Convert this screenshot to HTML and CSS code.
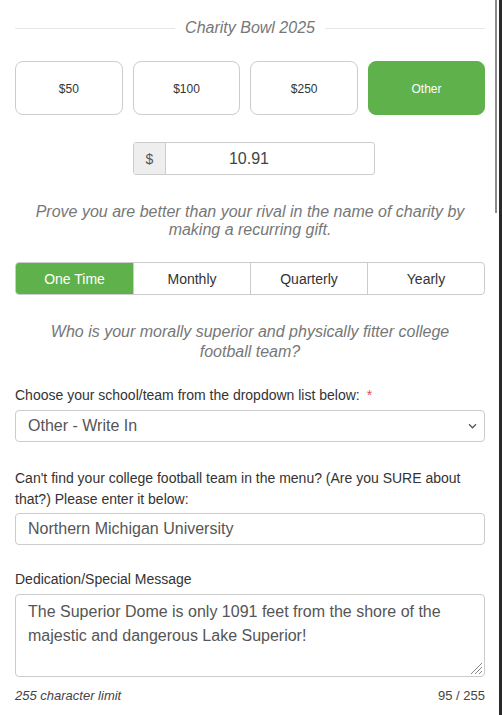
FILE: index.html
```html
<!DOCTYPE html>
<html lang="en">
<head>
<meta charset="utf-8">
<title>Charity Bowl 2025</title>
<link rel="stylesheet" href="styles.css">
</head>
<body>
<div class="page">
  <div class="title-row">
    <span class="rule"></span>
    <h1 class="title">Charity Bowl 2025</h1>
    <span class="rule"></span>
  </div>

  <div class="amounts">
    <button class="amount">$50</button>
    <button class="amount">$100</button>
    <button class="amount">$250</button>
    <button class="amount active">Other</button>
  </div>

  <div class="input-group">
    <span class="addon">$</span>
    <span class="amount-input">10.91</span>
  </div>

  <p class="lead">Prove you are better than your rival in the name of charity by making a recurring gift.</p>

  <div class="freq">
    <span class="seg active">One Time</span>
    <span class="seg">Monthly</span>
    <span class="seg">Quarterly</span>
    <span class="seg">Yearly</span>
  </div>

  <p class="question">Who is your morally superior and physically fitter college football team?</p>

  <label class="label">Choose your school/team from the dropdown list below: <span class="req">*</span></label>
  <div class="field select">
    <span>Other - Write In</span>
    <svg class="chev" width="9" height="6" viewBox="0 0 9 6"><path d="M1 1.3 L4.5 4.8 L8 1.3" fill="none" stroke="#555" stroke-width="1.3"/></svg>
  </div>

  <label class="label two">Can't find your college football team in the menu? (Are you SURE about that?) Please enter it below:</label>
  <div class="field">Northern Michigan University</div>

  <label class="label three">Dedication/Special Message</label>
  <div class="field textarea">
    The Superior Dome is only 1091 feet from the shore of the majestic and dangerous Lake Superior!
    <svg class="grip" width="14" height="14" viewBox="0 0 14 14"><path d="M13 2 L2 13 M13 6 L6 13 M13 10 L10 13" stroke="#888" stroke-width="1"/></svg>
  </div>
  <div class="counter">
    <span class="limit">255 character limit</span>
    <span class="count">95 / 255</span>
  </div>
</div>
<div class="scrollbar"><div class="track"><div class="thumb"></div></div><div class="edge"></div></div>
</body>
</html>
```

FILE: styles.css
```css
html, body {
  margin: 0;
  padding: 0;
  height: 100%;
  overflow: hidden;
}
body {
  display: flex;
  background: #fff;
  font-family: "Liberation Sans", Arial, sans-serif;
  color: #333;
}
.page {
  flex: 1;
  padding: 18px 9px 0 15px;
  min-width: 0;
}
.title-row {
  display: flex;
  align-items: center;
  gap: 10px;
}
.rule {
  flex: 1;
  height: 1px;
  background: #e6e6e6;
}
.title {
  margin: 0;
  font-size: 16px;
  line-height: 20px;
  font-weight: normal;
  font-style: italic;
  color: #777;
}
.amounts {
  margin-top: 23px;
  display: grid;
  grid-template-columns: 1fr 1fr 1fr 117px;
  gap: 10px;
}
.amount {
  height: 54px;
  border: 1px solid #ccc;
  border-radius: 8px;
  background: #fff;
  font-family: "Liberation Sans", Arial, sans-serif;
  font-size: 12px;
  color: #333;
  padding: 2px 0 0;
}
.amount.active {
  background: #5fb14b;
  border-color: #5fb14b;
  color: #fff;
}
.input-group {
  margin: 27px 0 0 118px;
  width: 242px;
  height: 33px;
  display: flex;
  box-sizing: border-box;
  border: 1px solid #ccc;
  border-radius: 3px;
}
.addon {
  width: 31px;
  background: #eee;
  border-right: 1px solid #ccc;
  display: flex;
  align-items: center;
  justify-content: center;
  font-size: 14px;
  color: #555;
}
.amount-input {
  flex: 1;
  display: flex;
  align-items: center;
  justify-content: center;
  padding-right: 42px;
  font-size: 16px;
  color: #444;
}
.lead, .question {
  margin: 0;
  text-align: center;
  font-style: italic;
  font-size: 16px;
  color: #777;
}
.lead {
  margin-top: 28px;
  line-height: 18px;
  padding: 0 12px;
}
.freq {
  margin-top: 23px;
  height: 33px;
  display: grid;
  grid-template-columns: repeat(4, 1fr);
  box-sizing: border-box;
  border: 1px solid #ccc;
  border-radius: 4px;
  overflow: hidden;
}
.seg {
  display: flex;
  align-items: center;
  justify-content: center;
  font-size: 14px;
  color: #333;
  border-left: 1px solid #ccc;
}
.seg:first-child { border-left: none; }
.seg.active {
  background: #5fb14b;
  color: #fff;
}
.question {
  margin-top: 27px;
  line-height: 20px;
  padding: 0 30px;
}
.label {
  display: block;
  margin-top: 23px;
  font-size: 14px;
  line-height: 20px;
  color: #333;
}
.label.two { margin-top: 26px; line-height: 21px; }
.label.three { margin-top: 24px; }
.req { color: #d9534f; margin-left: 3px; }
.field {
  margin-top: 5px;
  height: 32px;
  box-sizing: border-box;
  border: 1px solid #ccc;
  border-radius: 4px;
  padding: 0 12px;
  display: flex;
  align-items: center;
  font-size: 16px;
  color: #555;
}
.label.two + .field { margin-top: 3px; }
.select {
  justify-content: space-between;
  padding-right: 7px;
}
.textarea {
  position: relative;
  display: block;
  height: 83px;
  padding: 5px 12px;
  line-height: 24px;
  margin-top: 5px;
}
.grip {
  position: absolute;
  right: 1px;
  bottom: 1px;
}
.counter {
  margin-top: 10px;
  display: flex;
  justify-content: space-between;
  font-size: 13px;
  line-height: 18px;
  color: #444;
}
.limit { font-style: italic; }
.scrollbar {
  width: 8px;
  display: flex;
  height: 100%;
}
.track {
  width: 5px;
  padding-left: 1px;
  box-sizing: border-box;
}
.thumb {
  width: 2px;
  height: 213px;
  background: #8a8a8a;
}
.edge {
  width: 3px;
  background: #2a2a2a;
}
```
